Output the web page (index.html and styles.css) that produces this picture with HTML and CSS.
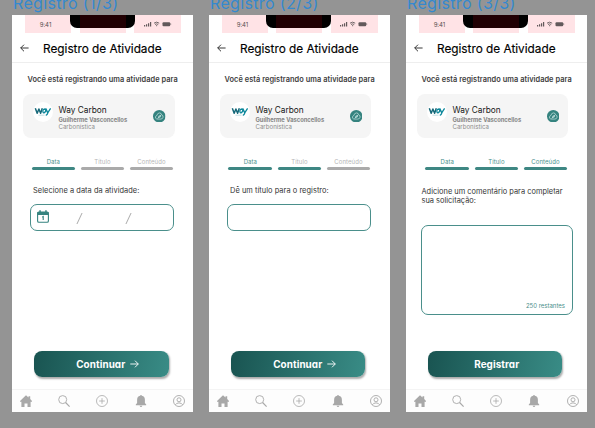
FILE: index.html
```
<!DOCTYPE html>
<html lang="pt-BR">
<head>
<meta charset="utf-8">
<title>Registro de Atividade</title>
<link rel="stylesheet" href="styles.css">
</head>
<body>
<svg class="defs" aria-hidden="true">
  <symbol id="back" viewBox="0 0 9 8"><path d="M8.6 4H.7M4 .7.7 4 4 7.3"/></symbol>
  <symbol id="next" viewBox="0 0 9 8"><path d="M.3 4h8M5 .7 8.3 4 5 7.3"/></symbol>
  <symbol id="signals" viewBox="0 0 28 6">
    <path d="M0 4h1.2v1.5H0zM2 3.3h1.2v2.2H2zM4 2.2h1.2v3.3H4zM6 1h1.2v4.5H6z" fill="currentColor"/>
    <path d="M10 2.2q2.6-2.1 5.2 0M11 3.5q1.6-1.3 3.2 0M12 4.7h1.2" fill="none" stroke="currentColor" stroke-width=".9"/>
    <rect x="18.5" y="1.2" width="7.7" height="4" rx="1" fill="currentColor"/>
    <path d="M26.7 2.5v1.4" stroke="currentColor" stroke-width=".6"/>
  </symbol>
  <symbol id="way" viewBox="0 0 20 20">
    <circle cx="10" cy="10" r="10" fill="#fff"/>
    <path d="M2.300 6.300 4.200 11.300 5.900 7 7.600 11.300 9.300 6.300" fill="none" stroke="#17697a" stroke-width="1.500" stroke-linejoin="round"/>
    <path d="M12.600 7Q9.500 6.800 9.900 9.800q.8 2.500 2.800-.7V6.500M12.900 6.500 14.700 10.800 17.600 6.300M15 10.500Q14.300 13 12.800 13.300" fill="none" stroke="#0b879b" stroke-width="1.300"/>
    <path d="M5.500 13.200h6" stroke="#9cc9cf" stroke-width=".6"/>
  </symbol>
  <symbol id="badge" viewBox="0 0 12 12">
    <circle cx="6" cy="6" r="6" fill="#35837f"/>
    <path d="M3.600 8.600Q2 8.200 2.400 6.500q.4-1.100 1.300-1.200Q4.200 2.900 6.200 2.800q1.900.1 2.300 2Q9.900 5.200 9.700 6.900 9.300 8.600 7.600 8.700H3.600M4.500 8.200 7.400 5.100M5.200 7.300Q4.900 5.300 7.400 5.100 7.800 7.300 5.200 7.300" fill="none" stroke="#d5eeec" stroke-width=".6"/>
  </symbol>
  <symbol id="calendar" viewBox="0 0 12 13">
    <rect x=".6" y="2.100" width="10.800" height="10.100" rx="1.300" fill="none" stroke="#35837f" stroke-width="1.100"/>
    <path d="M.4 2h11.200v3H.4zM2.300.3h1.500v2H2.300zM8.200.3h1.500v2H8.200z" fill="#35837f"/>
    <path d="M5.200 7.200 6.200 6.500v3.600" fill="none" stroke="#35837f" stroke-width="1.100"/>
  </symbol>
  <symbol id="home" viewBox="0 0 12 12"><path d="M6 .2 8.500 2.500V1.200h1.700v2.900L12 6v.7h-1.400V12H7.500V8.500h-3V12H1.400V6.700H0V6z" fill="currentColor"/></symbol>
  <symbol id="search" viewBox="0 0 12 12"><g fill="none" stroke="currentColor"><circle cx="4.700" cy="4.600" r="4" stroke-width=".9"/><path d="m7.600 7.500 4 4.100" stroke-width="1.100"/></g></symbol>
  <symbol id="plus" viewBox="0 0 12 12"><g fill="none" stroke="currentColor" stroke-width=".8"><circle cx="6" cy="6" r="5.500"/><path d="M6 3.200v5.600M3.200 6h5.600"/></g></symbol>
  <symbol id="bell" viewBox="0 0 12 12"><path d="M6 0q.8 0 .9.800 3 .7 3 4v3.300l1.300 1.500v.6H.8v-.6l1.300-1.500V4.800q0-3.300 3-4Q5.200 0 6 0zM4.600 10.800h2.800Q7 12 6 12t-1.400-1.200z" fill="currentColor"/></symbol>
  <symbol id="user" viewBox="0 0 12 12"><g fill="none" stroke="currentColor" stroke-width=".9"><circle cx="6" cy="6" r="5.500"/><circle cx="6" cy="4.800" r="2"/><path d="M2.300 9.900Q3.300 7.900 6 7.900t3.700 2"/></g></symbol>
</svg>

<main class="board">
  <section class="frame">
    <h2 class="frame-name">Registro (1/3)</h2>
    <article class="phone">
      <div class="status"><span class="time">9:41</span><span></span><span><svg class="signals"><use href="#signals"/></svg></span><i class="notch"></i></div>
      <header class="header"><svg class="back"><use href="#back"/></svg><h1>Registro de Atividade</h1></header>
      <p class="intro">Você está registrando uma atividade para</p>
      <div class="card"><svg class="logo"><use href="#way"/></svg><div class="who"><p class="company">Way Carbon</p><p class="person">Guilherme Vasconcellos</p><p class="role">Carbonística</p></div><svg class="badge"><use href="#badge"/></svg></div>
      <div class="steps"><span class="done">Data</span><span>Título</span><span>Conteúdo</span></div>
      <div class="form"><p class="label">Selecione a data da atividade:</p><div class="field"><svg class="calendar"><use href="#calendar"/></svg><span class="slash"></span><span class="slash"></span></div></div>
      <div class="button"><span>Continuar</span><svg class="next"><use href="#next"/></svg></div>
      <nav class="nav"><svg><use href="#home"/></svg><svg><use href="#search"/></svg><svg><use href="#plus"/></svg><svg><use href="#bell"/></svg><svg><use href="#user"/></svg></nav>
    </article>
  </section>

  <section class="frame">
    <h2 class="frame-name">Registro (2/3)</h2>
    <article class="phone">
      <div class="status"><span class="time">9:41</span><span></span><span><svg class="signals"><use href="#signals"/></svg></span><i class="notch"></i></div>
      <header class="header"><svg class="back"><use href="#back"/></svg><h1>Registro de Atividade</h1></header>
      <p class="intro">Você está registrando uma atividade para</p>
      <div class="card"><svg class="logo"><use href="#way"/></svg><div class="who"><p class="company">Way Carbon</p><p class="person">Guilherme Vasconcellos</p><p class="role">Carbonística</p></div><svg class="badge"><use href="#badge"/></svg></div>
      <div class="steps"><span class="done">Data</span><span class="current">Título</span><span>Conteúdo</span></div>
      <div class="form"><p class="label">Dê um título para o registro:</p><div class="field"></div></div>
      <div class="button"><span>Continuar</span><svg class="next"><use href="#next"/></svg></div>
      <nav class="nav"><svg><use href="#home"/></svg><svg><use href="#search"/></svg><svg><use href="#plus"/></svg><svg><use href="#bell"/></svg><svg><use href="#user"/></svg></nav>
    </article>
  </section>

  <section class="frame">
    <h2 class="frame-name">Registro (3/3)</h2>
    <article class="phone">
      <div class="status"><span class="time">9:41</span><span></span><span><svg class="signals"><use href="#signals"/></svg></span><i class="notch"></i></div>
      <header class="header"><svg class="back"><use href="#back"/></svg><h1>Registro de Atividade</h1></header>
      <p class="intro">Você está registrando uma atividade para</p>
      <div class="card"><svg class="logo"><use href="#way"/></svg><div class="who"><p class="company">Way Carbon</p><p class="person">Guilherme Vasconcellos</p><p class="role">Carbonística</p></div><svg class="badge"><use href="#badge"/></svg></div>
      <div class="steps"><span class="done">Data</span><span class="done">Título</span><span class="done">Conteúdo</span></div>
      <div class="form comment"><p class="label">Adicione um comentário para completar<br>sua solicitação:</p><div class="field area"><span>250 restantes</span></div></div>
      <div class="button"><span>Registrar</span></div>
      <nav class="nav"><svg><use href="#home"/></svg><svg><use href="#search"/></svg><svg><use href="#plus"/></svg><svg><use href="#bell"/></svg><svg><use href="#user"/></svg></nav>
    </article>
  </section>
</main>
</body>
</html>
```
FILE: styles.css
```
* { box-sizing: border-box; }
body { margin: 0; background: #949494; font-family: Inter, "Liberation Sans", sans-serif; color: #151515; overflow: hidden; }
h1, h2, p { margin: 0; font-weight: 400; white-space: nowrap; }
svg { display: block; flex: none; }
.defs { display: none; }

.board { display: flex; gap: 16.3px; padding-left: 12px; height: 428px; }
.frame { width: 180.7px; flex: none; }
.frame-name { height: 15px; padding-left: 1px; font-size: 16px; letter-spacing: .35px; line-height: 20px; margin-top: -7px; margin-bottom: 7px; color: #3489cf; }
.phone { height: 396.5px; background: #fff; display: flex; flex-direction: column; }

.status { position: relative; height: 18px; display: grid; grid-template-columns: 46px 46px 47px; gap: 8.5px; padding-left: 13px; flex: none; }
.status > span { background: #ffe3e6; display: flex; align-items: center; justify-content: center; }
.status .time { font-size: 6px; color: #574d4f; padding-right: 5px; }
.signals { width: 28px; height: 6px; color: #62595b; }
.notch { position: absolute; left: 57.5px; top: 0; width: 65px; height: 13px; border-radius: 0 0 7px 7px; background: linear-gradient(90deg, #000 10px, #210003 10px, #210003 56px, #000 56px); }

.header { height: 30px; flex: none; display: flex; align-items: center; padding: 2px 0 0 8px; border-bottom: 1px solid #eee; }
.back { width: 9px; height: 8px; margin-top: -1.5px; fill: none; stroke: #222; stroke-width: .9; }
.header h1 { margin-left: 14px; font-size: 11.8px; line-height: 14px; color: #000; -webkit-text-stroke: .15px #000; }
.intro { padding-left: 15.5px; margin-top: 12px; font-size: 7.4px; letter-spacing: .05px; line-height: 10px; font-weight: 600; color: #404040; }

.card { margin: 9px 0 0 11px; width: 151.5px; height: 43.5px; flex: none; border-radius: 8px; background: #f5f5f5; display: flex; padding: 8px 9px 0 10px; }
.logo { width: 20px; height: 20px; }
.who { margin-left: 5.5px; flex: 1; }
.company { font-size: 8.3px; line-height: 11px; margin-top: 2.5px; }
.person { font-size: 5.8px; line-height: 7px; font-weight: 700; color: #858585; }
.role { font-size: 6.1px; line-height: 8px; color: #8c8c8c; }
.badge { width: 12.5px; height: 12.5px; margin-top: 7.5px; }

.steps { display: flex; gap: 5.4px; margin: 19px 0 0 19.5px; flex: none; }
.steps span { width: 43.7px; height: 13px; display: flex; flex-direction: column; color: #b5b5b5; font-size: 6px; line-height: 9px; text-align: center; letter-spacing: .08px; }
.steps span::after { content: ""; height: 3px; margin-top: 1px; border-radius: 1.5px; background: #aaa; }
.steps .done { color: #4a918d; }
.steps .done::after, .steps .current::after { background: #3e8783; }

.form { padding: 16px 0 0 18px; flex: 1; }
.label { font-size: 7.4px; line-height: 9px; letter-spacing: .06px; color: #333; padding-left: 3px; }
.field { width: 144px; height: 27px; margin-top: 9.5px; border: 1px solid #4a8f8b; border-radius: 7px; display: flex; }
.calendar { width: 12px; height: 13px; margin: 5px 0 0 6px; }
.slash { width: 1px; height: 11px; background: #aaa; transform: skewX(-25deg); margin: 7.5px 0 0 29.5px; }
.slash + .slash { margin-left: 48px; }
.comment { padding: 17px 0 0 15.5px; }
.comment .label { padding-left: 0; letter-spacing: .03px; }
.area { width: 151.5px; height: 90px; margin-top: 20px; align-items: flex-end; justify-content: flex-end; padding: 0 7px 3.5px 0; font-size: 6px; line-height: 8px; color: #4a8f8b; }

.button { width: 134.5px; height: 26px; flex: none; margin: 0 0 11.5px 22px; border-radius: 8px; background: linear-gradient(100deg, #195451, #398c86); box-shadow: 1px 1.5px 2px #0005; display: flex; align-items: center; justify-content: center; gap: 5px; padding-left: 13px; color: #fff; font-size: 9.9px; font-weight: 700; letter-spacing: .08px; font-feature-settings: "cv11"; }
.button span:only-child { margin-left: -10px; }
.next { width: 9px; height: 8px; fill: none; stroke: #fff; stroke-width: .9; }
.nav { height: 23px; flex: none; display: flex; justify-content: space-between; padding: 5px 8px 0; background: #fdfdfd; border-top: 1px solid #f4f4f4; color: #a8a8a8; }
.nav svg { width: 12px; height: 12px; }
```
